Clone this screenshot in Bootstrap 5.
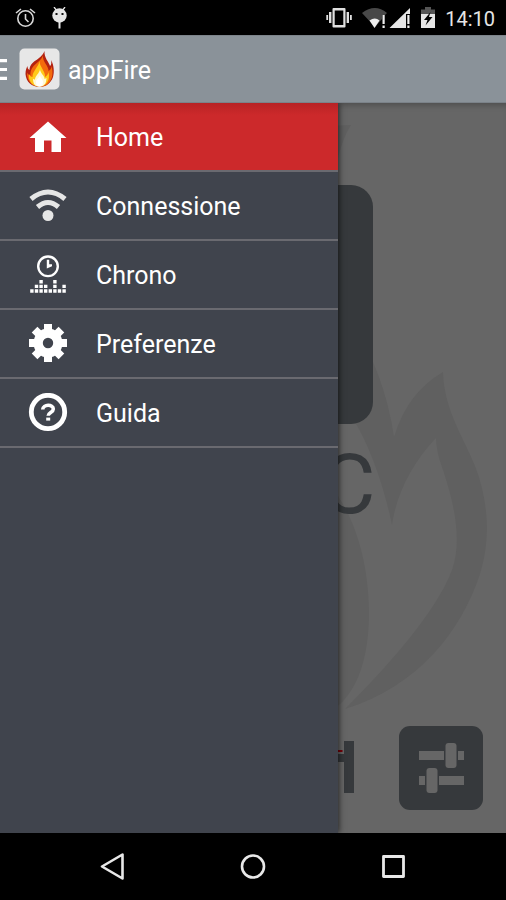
<!DOCTYPE html>
<html lang="it">
<head>
<meta charset="utf-8">
<meta name="viewport" content="width=device-width, initial-scale=1">
<title>appFire</title>
<link href="https://cdn.jsdelivr.net/npm/bootstrap@5.3.0/dist/css/bootstrap.min.css" rel="stylesheet">
<style>
  body { font-family: Roboto, "Liberation Sans", sans-serif; background: #000; }
  svg { display: block; flex: none; }
  .status-bar { height: 35px; padding: 0 11px 0 15px; color: #e6e6e6; }
  .status-icons { gap: 10px; }
  .clock { font-size: 20px; line-height: 24px; padding-top: 2px; }
  .app-bar { height: 68px; background: #8a9299; border-top: 1px solid #7c838a; border-bottom: 1px solid #7b8289; }
  .app-title { font-size: 25px; line-height: 32px; font-weight: 400; padding-top: 3px; }
  .menu-toggle { width: 7px; margin-right: 12px; }
  .app-icon { margin-right: 8px; }
  .stage { background: #666; box-shadow: inset 0 6px 6px -4px rgba(0,0,0,.25); padding: 82px 23px 23px; }
  .watermark { inset: 0; width: 100%; height: 100%; }
  .display-column { width: 239px; max-width: 100%; }
  .display-panel { height: 239px; border-radius: 22px; background: #36393c; }
  .unit-label { font-size: 84px; line-height: 98px; color: #36393c; margin: 12px -3px 0 0; }
  .tune-button, .tune-button:hover { width: 84px; height: 84px; border-radius: 11px; background: #36393c; margin-left: 45px; }
  .drawer { top: 0; bottom: 0; left: 0; width: 338px; max-width: 100%; background: #40444d; box-shadow: 1px 0 6px rgba(0,0,0,.65); }
  .drawer .list-group-item { height: 69px; padding: 0 16px 0 28px; gap: 28px; font-size: 25px; line-height: 32px; color: #fff; background: transparent; border: 0; border-bottom: 2px solid #6a6a70; }
  .drawer .list-group-item.active { margin: 0; background: linear-gradient(#b82225, #cc292b 12px); }
  .drawer .list-group-item span { padding-top: 2px; }
  .nav-keys { height: 67px; }
  .nav-keys button { width: 140px; height: 67px; }
</style>
</head>
<body>
<div class="d-flex flex-column min-vh-100">
  <div class="status-bar d-flex align-items-center justify-content-between">
    <div class="d-flex align-items-center gap-3">
      <svg width="21" height="21" viewBox="0 0 21 21" fill="none" stroke="#d8d8d8" stroke-width="1.6" aria-label="Sveglia" role="img">
        <circle cx="10.500" cy="11.500" r="7.700"/><path d="M10.500 7v5l3 3M1 6l5-4M20 6l-5-4"/>
      </svg>
      <svg width="16" height="22" viewBox="0 0 16 22" fill="#e6e6e6" aria-label="Android" role="img">
        <circle cx="7.500" cy="8.500" r="7.200"/><path d="M6.500 15h2v6.500h-2z"/><path d="M2 0l3 4M13 0l-3 4" stroke="#e6e6e6" stroke-width="1.300"/><path d="M3.500 6h2v2h-2zM9.500 6h2v2h-2z" fill="#111"/>
      </svg>
    </div>
    <div class="status-icons d-flex align-items-center">
      <svg width="26" height="21" viewBox="0 0 26 21" fill="#e0e0e0" aria-label="Vibrazione" role="img">
        <path fill-rule="evenodd" d="M7.500 1h11q1 0 1 1v17.500q0 1-1 1h-11q-1 0-1-1V2q0-1 1-1zM8.700 3.500V18h8.600V3.500z"/><path d="M3 5h2.400v11H3zM.3 8h1.800v5H.3zM20.600 5H23v11h-2.400zM24 8h1.800v5H24z"/>
      </svg>
      <svg width="49" height="22" viewBox="0 0 49 22" aria-label="Segnale" role="img">
        <path d="M0 6Q13-4 25 6l-2 2h-3v4l-7 8z" fill="#484848"/><path d="M7.500 13.500q5.500-4 10 0L12.500 21z" fill="#eee"/>
        <path d="M27.500 21L48 1v6h-4v14z" fill="#e6e6e6"/>
        <path d="M20.500 8h2.200v9h-2.200zM20.500 18.500h2.200V21h-2.200zM45.300 8h2.200v9h-2.200zM45.300 18.500h2.200V21h-2.200z" fill="#eee"/>
      </svg>
      <svg width="14" height="21" viewBox="0 0 14 21" aria-label="Batteria in carica" role="img">
        <path d="M0 2.500h4V0h6v2.500h4V8H0z" fill="#555"/><path d="M0 7h14v14H0z" fill="#e6e6e6"/><path d="M9.500 5L3 13h3.500L4.500 18.500l7-8.500H8z" fill="#000"/>
      </svg>
      <span class="clock">14:10</span>
    </div>
  </div>

  <header class="app-bar d-flex align-items-center text-white">
    <button class="menu-toggle btn p-0 border-0 rounded-0" type="button" aria-label="Menu">
      <svg width="7" height="21" viewBox="0 0 7 21" fill="#fff"><path d="M0 0h7v3.200H0zM0 8.900h7v3.200H0zM0 17.800h7V21H0z"/></svg>
    </button>
    <svg class="app-icon" width="41" height="42" viewBox="0 0 41 42" aria-hidden="true">
      <rect x=".5" y=".5" width="40" height="41" rx="5" fill="#e7e7e7"/>
      <path d="M25.500 3C25 10 30 14 31 18c1.500-1 1.500-4 1-6 3 5 3.500 12 2 17-2 6-7 10-13.500 10C13 39 7 34 6.500 26c0-4 1-6 2-8 0 2 .5 3 2 4 .5-10 11-9 15-19z" fill="#b32210"/>
      <path d="M24 7c-1 7 6 11 5.500 16 2-1 3-3 3-5 2 7 1 12-2 16-2 3-5 4.500-10 4.500-7 0-12.500-5-12.500-14 1 2 2 2.500 3.500 3C11 16 22 15 24 7z" fill="#f36a0c"/>
      <path d="M20.500 13c0 6 6 10 5.500 16 2-1 3-3 3.500-5 2 8-2 14.500-9 14.500S9 33 10 26c1 2 2 3 3.500 3 0-6 6-10 7-16z" fill="#ffc91a"/>
      <path d="M21 21c0 4 5 7 4.500 10l2-1c0 6-3 8.700-7 8.700-4.500 0-6.500-3-6.500-8l2 1c0-4 4.500-6 5-10.700z" fill="#fff9d4"/>
      <path d="M21 27c0 3 3 4 3 7s-1.500 4.500-3.500 4.500S17 37 17 34s3.500-4 4-7z" fill="#fff"/>
    </svg>
    <h1 class="app-title m-0">appFire</h1>
  </header>

  <main class="stage position-relative flex-grow-1 d-flex flex-column overflow-hidden">
    <svg class="watermark position-absolute" viewBox="0 0 506 730" preserveAspectRatio="xMaxYMid meet" fill="#606060" aria-hidden="true">
      <g transform="translate(0 -103)">
        <path d="M330 126L351 125Q343 137 338 158L330 170z"/>
        <path d="M350 320Q384 370 394 437Q407 393 443 372C444 410 464 438 475 466C487 497 492 535 480 574C461 632 417 687 345 709C385 669 436 613 452 570C463 539 453 500 443 470Q436 451 436 438C412 463 396 495 392 525C384 486 370 447 355 422L330 390z"/>
        <path d="M330 485C358 520 369 568 369 617C368 658 358 688 339 705L330 710z"/>
      </g>
    </svg>
    <section class="display-column position-relative mx-auto">
      <div class="display-panel"></div>
      <div class="unit-label text-end">C</div>
    </section>
    <div class="position-relative d-flex align-items-center justify-content-end mt-auto">
      <svg width="24" height="54" viewBox="0 0 24 54" aria-hidden="true">
        <path d="M14 0h10v52H14zM0 13h15v8H0z" fill="#36393c"/><path d="M0 9h12.500v2H0z" fill="#780008"/>
      </svg>
      <button type="button" class="tune-button btn border-0 p-0 d-flex align-items-center justify-content-center" aria-label="Regolazioni">
        <svg width="46" height="50" viewBox="0 0 46 50" fill="#666">
          <path d="M1 8h25v9H1zM40 8h6v9h-6zM1 33h6v9H1zM21 33h25v9H21z"/><rect x="27.500" y="0" width="11" height="25" rx="3"/><rect x="8.500" y="25" width="11" height="25" rx="3"/>
        </svg>
      </button>
    </div>

    <nav class="drawer position-absolute list-group rounded-0" aria-label="Menu principale">
      <a href="#home" class="list-group-item active d-flex align-items-center" aria-current="page">
        <svg width="40" height="40" viewBox="0 0 40 40" fill="#fff"><path d="M20 4.500L38.500 21H33v14H23.500V23.500H16V35H7V21H1.500z"/></svg>
        <span>Home</span>
      </a>
      <a href="#connessione" class="list-group-item d-flex align-items-center">
        <svg width="40" height="40" viewBox="0 0 40 40" fill="none" stroke="#e6e6e6" stroke-width="5"><path d="M3 13Q20-1 37 13M9.500 21Q20 12 30.500 21"/><circle cx="20" cy="29.500" r="5.500" fill="#e6e6e6" stroke="none"/></svg>
        <span>Connessione</span>
      </a>
      <a href="#chrono" class="list-group-item d-flex align-items-center">
        <svg width="40" height="40" viewBox="0 0 40 40" fill="#fff">
          <circle cx="20" cy="11.300" r="9.800" fill="none" stroke="#fff" stroke-width="2.400"/><path d="M18.800 4.800h2.400v4.500L24 9.300v2L18.800 13.500z"/>
          <path d="M2.200 34.300h3.400v3.400H2.200zM6.800 34.300h3.400v3.400H6.800zM11.400 34.300h3.400v3.400h-3.400zM16 34.300h3.400v3.400H16zM20.600 34.300H24v3.400h-3.400zM25.200 34.300h3.400v3.400h-3.400zM29.800 34.300h3.400v3.400h-3.400zM34.400 34.300h3.400v3.400h-3.400zM6.800 29.700h3.400v3.400H6.800zM11.400 29.700h3.400v3.400h-3.400zM16 29.700h3.400v3.400H16zM25.200 29.700h3.400v3.400h-3.400zM34.400 29.700h3.400v3.400h-3.400zM11.400 25.100h3.400v3.400h-3.400zM25.200 25.100h3.400v3.400h-3.400z"/>
        </svg>
        <span>Chrono</span>
      </a>
      <a href="#preferenze" class="list-group-item d-flex align-items-center">
        <svg width="40" height="40" viewBox="0 0 40 40" fill="#fff">
          <path fill-rule="evenodd" d="M20 4.500a14.500 14.500 0 1 0 0 29 14.500 14.500 0 0 0 0-29zm0 9.300a5.200 5.200 0 1 1 0 10.400 5.200 5.200 0 0 1 0-10.400z"/>
          <path d="M16 0h8v9h-8zM16 29h8v9h-8zM1 15h9v8H1zM30 15h9v8h-9z"/>
          <path transform="rotate(45 20 19)" d="M16 0h8v9h-8zM16 29h8v9h-8zM1 15h9v8H1zM30 15h9v8h-9z"/>
        </svg>
        <span>Preferenze</span>
      </a>
      <a href="#guida" class="list-group-item d-flex align-items-center">
        <svg width="40" height="40" viewBox="0 0 40 40" fill="none" stroke="#fff"><circle cx="20" cy="19" r="16.700" stroke-width="4.800"/><path d="M14.700 16.500C15 11 25.300 11 25.300 16c0 3.500-5.100 3.500-5.100 6.800" stroke-width="3.600"/><path d="M18.200 24.600h4v3h-4z" fill="#fff" stroke="none"/></svg>
        <span>Guida</span>
      </a>
    </nav>
  </main>

  <footer class="nav-keys d-flex justify-content-center">
    <button type="button" class="btn border-0 p-0 d-flex align-items-center justify-content-center" aria-label="Indietro">
      <svg width="26" height="28" viewBox="0 0 26 28" fill="none" stroke="#e8e8e8" stroke-width="2.600" stroke-linejoin="round"><path d="M22.500 1.500v24L2 13.500z"/></svg>
    </button>
    <button type="button" class="btn border-0 p-0 d-flex align-items-center justify-content-center" aria-label="Schermata Home">
      <svg width="26" height="26" viewBox="0 0 26 26" fill="none" stroke="#e8e8e8" stroke-width="2.600"><circle cx="13" cy="12.500" r="11"/></svg>
    </button>
    <button type="button" class="btn border-0 p-0 d-flex align-items-center justify-content-center" aria-label="Recenti">
      <svg width="24" height="24" viewBox="0 0 24 24" fill="none" stroke="#e8e8e8" stroke-width="2.800" stroke-linejoin="round"><path d="M2.500 1.500h20v20h-20z"/></svg>
    </button>
  </footer>
</div>
<script src="https://cdn.jsdelivr.net/npm/bootstrap@5.3.0/dist/js/bootstrap.bundle.min.js"></script>
</body>
</html>
